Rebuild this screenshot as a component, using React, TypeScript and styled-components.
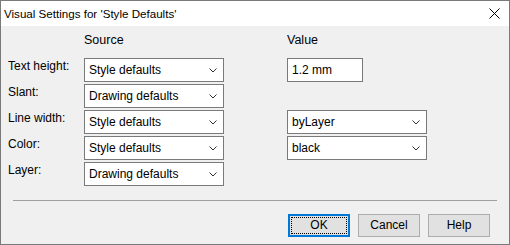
import React from "react";
import styled, {createGlobalStyle} from "styled-components";

const GlobalStyle = createGlobalStyle`
  html, body {
    margin: 0;
    padding: 0;
    background: #ffffff;
  }
  * {
    box-sizing: border-box;
  }
`;

const Window = styled.div`
  width: 510px;
  height: 245px;
  border: 1px solid #7a7a7a;
  display: flex;
  flex-direction: column;
  font-family: "Liberation Sans", Arial, sans-serif;
  font-size: 12px;
  color: #000;
  background: #f0f0f0;
`;

const TitleBar = styled.div`
  height: 25px;
  flex: none;
  background: #ffffff;
  display: flex;
  align-items: center;
  justify-content: space-between;
  padding: 0 9px 0 3px;
`;

const Title = styled.div`
  line-height: 15px;
  font-size: 11.6px;
`;

const CloseButton = styled.svg`
  width: 11px;
  height: 11px;
`;

const Body = styled.div`
  flex: 1;
  display: flex;
  flex-direction: column;
  padding-top: 7px;
`;

const Grid = styled.div`
  display: grid;
  grid-template-columns: 76px 140px 63px 140px;
  row-gap: 2px;
  padding-left: 7px;
`;

const ColumnHeader = styled.div<{$col: number}>`
  grid-column: ${p => p.$col};
  line-height: 15px;
  font-size: 12.5px;
  margin-bottom: 8px;
`;

const Label = styled.div`
  grid-column: 1;
  line-height: 15px;
  padding-top: 1px;
`;

const Field = styled.div<{$col: number; $width?: number}>`
  grid-column: ${p => p.$col};
  width: ${p => p.$width ? `${p.$width}px` : "100%"};
  height: 24px;
  background: #ffffff;
  border: 1px solid #7a7a7a;
  display: flex;
  align-items: center;
  justify-content: space-between;
  padding: 0 6px 0 4px;
  line-height: 15px;
`;

const Chevron = styled.svg`
  width: 8px;
  height: 5px;
`;

const Separator = styled.div`
  margin: 14px 12px 0 12px;
  border-top: 1px solid #a0a0a0;
`;

const ButtonRow = styled.div`
  display: flex;
  justify-content: flex-end;
  gap: 8px;
  padding: 13px 19px 0 0;
`;

const Button = styled.div<{$default?: boolean}>`
  width: 62px;
  height: 23px;
  background: #e1e1e1;
  border: 1px solid ${p => p.$default ? "#0078d7" : "#adadad"};
  box-shadow: ${p => p.$default ? "inset 0 0 0 1px #0078d7" : "none"};
  display: flex;
  align-items: center;
  justify-content: center;
  position: relative;
  line-height: 15px;
`;

const FocusRing = styled.div`
  position: absolute;
  inset: 2px;
  border: 1px dotted #000;
`;

function DropDown({col, value}: {col: number; value: string}) {
  return (
    <Field $col={col}>
      <span>{value}</span>
      <Chevron viewBox="0 0 8 5">
        <path d="M0.5 0.5 L4 4 L7.5 0.5" fill="none" stroke="#333" strokeWidth="1" />
      </Chevron>
    </Field>
  );
}

const rows: {label: string; source: string; value?: {kind: "text" | "select"; text: string}}[] = [
  {label: "Text height:", source: "Style defaults", value: {kind: "text", text: "1.2 mm"}},
  {label: "Slant:", source: "Drawing defaults"},
  {label: "Line width:", source: "Style defaults", value: {kind: "select", text: "byLayer"}},
  {label: "Color:", source: "Style defaults", value: {kind: "select", text: "black"}},
  {label: "Layer:", source: "Drawing defaults"},
];

function App() {
  return (
    <>
      <GlobalStyle />
      <Window>
        <TitleBar>
          <Title>Visual Settings for 'Style Defaults'</Title>
          <CloseButton viewBox="0 0 11 11">
            <path d="M0.5 0.5 L10.5 10.5 M10.5 0.5 L0.5 10.5" stroke="#000" strokeWidth="1" />
          </CloseButton>
        </TitleBar>
        <Body>
          <Grid>
            <ColumnHeader $col={2}>Source</ColumnHeader>
            <ColumnHeader $col={4}>Value</ColumnHeader>
            {rows.map(row => (
              <React.Fragment key={row.label}>
                <Label>{row.label}</Label>
                <DropDown col={2} value={row.source} />
                {row.value && (row.value.kind === "text"
                  ? <Field $col={4} $width={76}><span>{row.value.text}</span></Field>
                  : <DropDown col={4} value={row.value.text} />
                )}
              </React.Fragment>
            ))}
          </Grid>
          <Separator />
          <ButtonRow>
            <Button $default>
              <FocusRing />
              OK
            </Button>
            <Button>Cancel</Button>
            <Button>Help</Button>
          </ButtonRow>
        </Body>
      </Window>
    </>
  );
}

export default App;
